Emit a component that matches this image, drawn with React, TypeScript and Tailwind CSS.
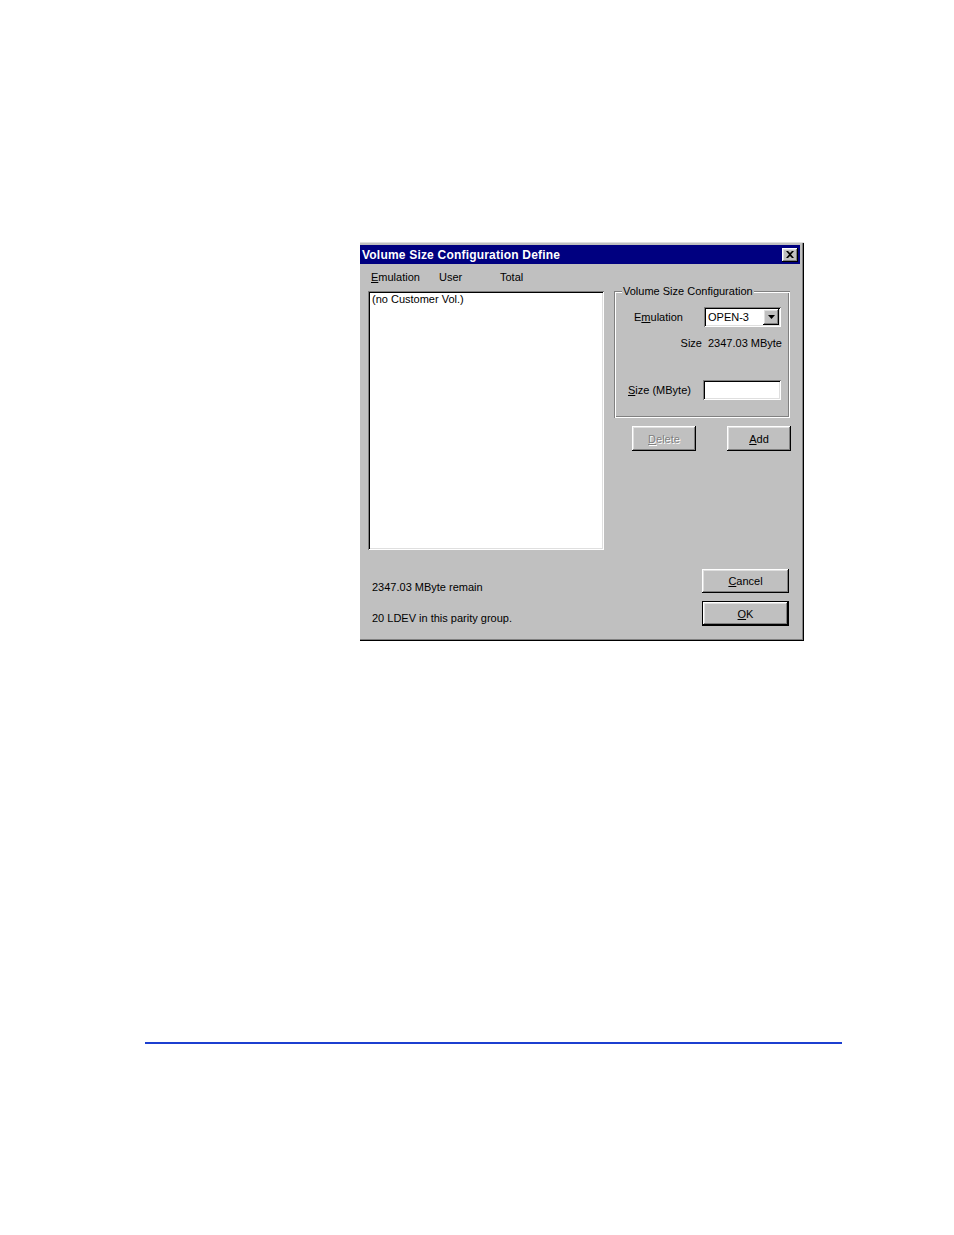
import * as React from "react";

const raised =
  "bg-[#c0c0c0] shadow-[inset_-1px_-1px_#000,inset_1px_1px_#fff,inset_-2px_-2px_#808080,inset_2px_2px_#dfdfdf]";
const sunken =
  "bg-white shadow-[inset_1px_1px_#808080,inset_-1px_-1px_#fff,inset_2px_2px_#000,inset_-2px_-2px_#dfdfdf]";

function Button({
  children,
  className,
  disabled,
  primary,
}: {
  children: React.ReactNode;
  className?: string;
  disabled?: boolean;
  primary?: boolean;
}) {
  return (
    <div
      className={`${className ?? ""} flex items-center justify-center ${
        primary ? "border border-black" : ""
      } ${raised} ${
        disabled ? "text-[#808080] [text-shadow:1px_1px_0_#fff]" : "text-black"
      }`}
    >
      <span className="leading-[14px]">{children}</span>
    </div>
  );
}

function CloseIcon() {
  return (
    <svg width="8" height="7" viewBox="0 0 8 7">
      <path d="M0 0h2l2 2 2-2h2L5 3.5 8 7H6L4 5 2 7H0l3-3.5z" fill="#000" />
    </svg>
  );
}

function ComboBox({ value }: { value: string }) {
  return (
    <div className={`w-[77px] h-[20px] flex items-center ${sunken}`}>
      <span className="flex-1 pl-[4px] leading-[14px]">{value}</span>
      <div className={`w-[16px] h-[16px] mr-[2px] flex items-center justify-center ${raised}`}>
        <svg width="7" height="4" viewBox="0 0 7 4">
          <path d="M0 0h7L3.5 4z" fill="#000" />
        </svg>
      </div>
    </div>
  );
}

export default function App() {
  return (
    <div className="w-[954px] h-[1235px] bg-white pt-[242px] font-['Liberation_Sans',Arial,sans-serif] text-[11px] text-black">
      <div className="ml-[360px] w-[444px] h-[399px] bg-[#c0c0c0] pt-[3px] pr-[4px] shadow-[inset_0_1px_#dfdfdf,inset_-1px_-1px_#000,inset_-2px_-2px_#808080]">
        {/* title bar */}
        <div className="h-[19px] bg-[#000080] flex items-center justify-between pl-[2px] pr-[2px]">
          <span className="text-white font-bold text-[12px] tracking-[0.2px] leading-[14px]">
            Volume Size Configuration Define
          </span>
          <div className={`w-[16px] h-[14px] flex items-center justify-center ${raised}`}>
            <CloseIcon />
          </div>
        </div>

        <div className="flex">
          {/* left column */}
          <div className="ml-[8px] w-[236px]">
            <div className="mt-[6px] h-[14px] leading-[14px] flex pl-[3px]">
              <span className="w-[68px]">
                <u>E</u>mulation
              </span>
              <span className="w-[61px]">User</span>
              <span>Total</span>
            </div>
            <div className={`mt-[7px] h-[259px] pt-[1px] pl-[4px] ${sunken}`}>
              <div className="leading-[14px]">(no Customer Vol.)</div>
            </div>
            <div className="mt-[30px] pl-[4px] leading-[14px]">2347.03 MByte remain</div>
            <div className="mt-[17px] pl-[4px] leading-[14px]">20 LDEV in this parity group.</div>
          </div>

          {/* right column */}
          <div className="ml-[10px] w-[177px] mt-[27px]">
            <div className="relative w-[176px] h-[127px] shadow-[inset_1px_1px_#808080,inset_-1px_-1px_#fff,inset_2px_2px_#fff,inset_-2px_-2px_#808080]">
              <span className="absolute -top-[7px] left-[8px] px-[1px] bg-[#c0c0c0] leading-[14px]">
                Volume Size Configuration
              </span>
              <div className="pt-[16px] flex items-center h-[36px]">
                <span className="w-[90px] pl-[20px] leading-[14px]">
                  E<u>m</u>ulation
                </span>
                <ComboBox value="OPEN-3" />
              </div>
              <div className="mt-[9px] h-[14px] leading-[14px] flex justify-end gap-[6px] pr-[8px]">
                <span>Size</span>
                <span>2347.03 MByte</span>
              </div>
              <div className="mt-[30px] flex items-center h-[20px]">
                <span className="w-[89px] pl-[14px] leading-[14px]">
                  <u>S</u>ize (MByte)
                </span>
                <div className={`w-[78px] h-[20px] ${sunken}`} />
              </div>
            </div>

            <div className="mt-[8px] flex pl-[18px]">
              <Button className="w-[64px] h-[25px]" disabled>
                <u>D</u>elete
              </Button>
              <Button className="ml-[31px] w-[64px] h-[25px]">
                <u>A</u>dd
              </Button>
            </div>

            <Button className="mt-[118px] ml-[88px] w-[87px] h-[24px]">
              <u>C</u>ancel
            </Button>
            <Button className="mt-[8px] ml-[88px] w-[87px] h-[25px]" primary>
              <u>O</u>K
            </Button>
          </div>
        </div>
      </div>

      <div className="mt-[401px] ml-[145px] w-[697px] h-[2px] bg-[#1c3fd0]" />
    </div>
  );
}
